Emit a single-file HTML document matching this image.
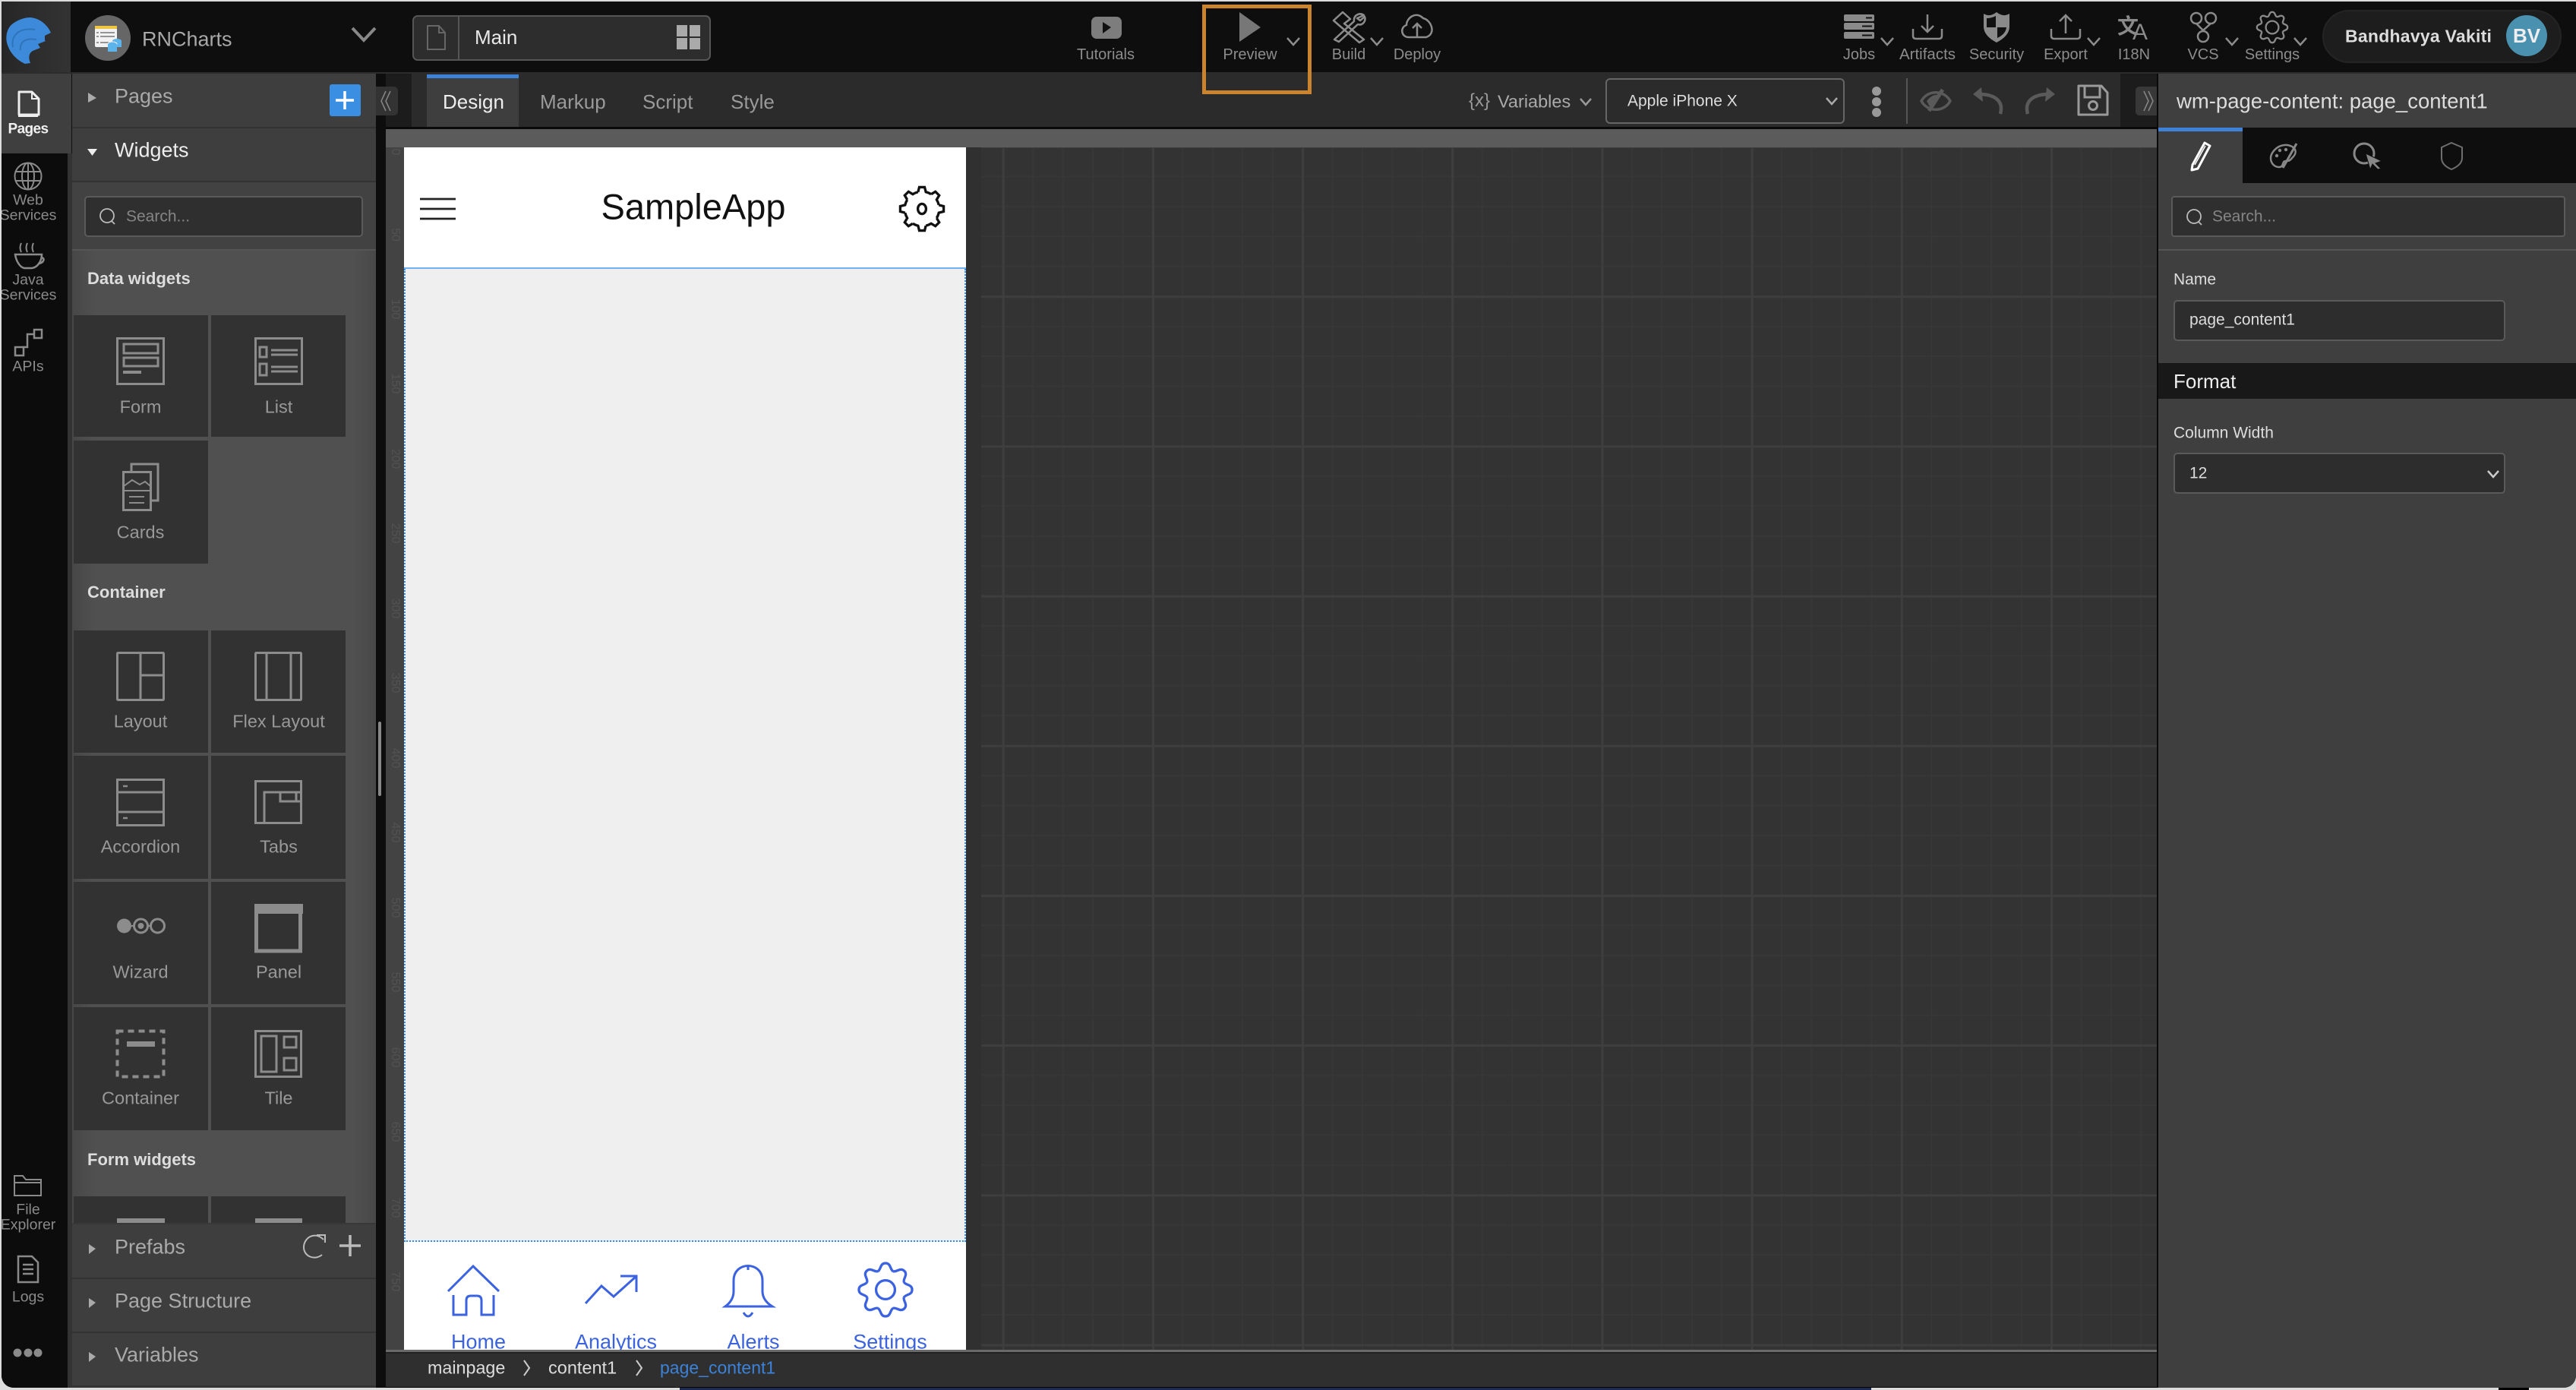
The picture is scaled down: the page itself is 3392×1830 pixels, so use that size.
<!DOCTYPE html>
<html><head><meta charset="utf-8">
<style>
html,body{margin:0;padding:0;width:3392px;height:1830px;overflow:hidden;background:#dcdcdc;font-family:"Liberation Sans","Noto Sans CJK SC",sans-serif}
#strip{position:absolute;left:0;top:1826px;width:3392px;height:4px;background:#dcdcdc;overflow:hidden}
#win{position:absolute;left:0;top:0;width:3392px;height:1830px;clip-path:inset(2px 0 3px 2px round 0 0 16px 16px);background:#0e0e0e;overflow:hidden}
.b{position:absolute}
.t{position:absolute;white-space:nowrap;line-height:1;transform:translateY(-50%)}
.c{position:absolute;white-space:nowrap;line-height:1;transform:translate(-50%,-50%)}
.l{font-size:20px;color:#8c8c8c}
.r{font-size:19.5px;color:#8a8a8a}
.h{font-size:27px;color:#aaa}
.w{font-size:23.5px;color:#999}
.s{font-size:21px;color:#858585}
.g{font-size:22px;font-weight:bold;color:#ddd}
.f{font-size:27px;color:#3b62e0}
.q{font-size:16px;color:#525252;left:520px;transform:translate(-50%,-50%) rotate(90deg)}
svg{position:absolute;left:0;top:0}
.i{fill:none;stroke:#8c8c8c;stroke-width:3}
.k{fill:#8c8c8c;stroke:none}
</style></head><body>
<div id="strip"><div class="b" style="left:895px;top:0;width:1569px;height:4px;background:#1a2b4d"></div><div class="b" style="left:3290px;top:0;width:40px;height:4px;background:#000"></div><div class="b" style="left:335px;top:1px;font-size:24px;color:#333;white-space:nowrap">Coming Features</div></div>
<div id="win">
<!-- top bar -->
<div class="b" style="left:0;top:0;width:3392px;height:95px;background:#0e0e0e"></div>
<div class="b" style="left:0;top:0;width:93px;height:97px;background:linear-gradient(90deg,#262626,#333)"></div>
<div class="b" style="left:0;top:95px;width:3392px;height:2px;background:#2c2c2c"></div>
<div class="b" style="left:543px;top:20px;width:389px;height:56px;background:#2d2d2d;border:2px solid #555;border-radius:7px"></div>
<div class="b" style="left:603px;top:21px;width:2px;height:58px;background:#555"></div>
<div class="b" style="left:3058px;top:13px;width:311px;height:66px;background:#1d1d1d;border:2px solid #242424;border-radius:36px"></div>
<div class="b" style="left:3300px;top:20px;width:54px;height:54px;background:#4a91b0;border-radius:50%"></div>
<div class="b" style="left:1583px;top:6px;width:134px;height:108px;border:5px solid #c9842d;z-index:5"></div>

<!-- left rail -->
<div class="b" style="left:0;top:97px;width:89px;height:1730px;background:#0c0c0c"></div>
<div class="b" style="left:0;top:97px;width:94px;height:105px;background:#3f3f3f"></div>
<div class="b" style="left:89px;top:202px;width:6px;height:1630px;background:#333"></div>

<!-- left panel -->
<div class="b" style="left:95px;top:97px;width:400px;height:70px;background:#3e3e3e"></div>
<div class="b" style="left:95px;top:167px;width:400px;height:2px;background:#333"></div>
<div class="b" style="left:95px;top:169px;width:400px;height:69px;background:#3e3e3e"></div>
<div class="b" style="left:95px;top:238px;width:400px;height:2px;background:#333"></div>
<div class="b" style="left:95px;top:240px;width:400px;height:88px;background:#424242"></div>
<div class="b" style="left:95px;top:328px;width:400px;height:2px;background:#555"></div>
<div class="b" style="left:111px;top:258px;width:363px;height:50px;background:#2f2f2f;border:2px solid #5a5a5a;border-radius:5px"></div>
<div class="b" style="left:95px;top:330px;width:400px;height:1300px;background:linear-gradient(90deg,#474747 0,#505050 30px,#505050 370px,#484848 100%)"></div>
<div class="b" style="left:434px;top:111px;width:41px;height:42px;background:#3b8fe3;border-radius:3px"></div>

<!-- tiles -->
<div class="b" style="left:97px;top:415px;width:177px;height:160px;background:#323232"></div>
<div class="b" style="left:278px;top:415px;width:177px;height:160px;background:#323232"></div>
<div class="b" style="left:97px;top:580px;width:177px;height:162px;background:#323232"></div>
<div class="b" style="left:97px;top:830px;width:177px;height:161px;background:#323232"></div>
<div class="b" style="left:278px;top:830px;width:177px;height:161px;background:#323232"></div>
<div class="b" style="left:97px;top:995px;width:177px;height:162px;background:#323232"></div>
<div class="b" style="left:278px;top:995px;width:177px;height:162px;background:#323232"></div>
<div class="b" style="left:97px;top:1161px;width:177px;height:161px;background:#323232"></div>
<div class="b" style="left:278px;top:1161px;width:177px;height:161px;background:#323232"></div>
<div class="b" style="left:97px;top:1326px;width:177px;height:162px;background:#323232"></div>
<div class="b" style="left:278px;top:1326px;width:177px;height:162px;background:#323232"></div>
<div class="b" style="left:97px;top:1575px;width:177px;height:40px;background:#323232"></div>
<div class="b" style="left:278px;top:1575px;width:177px;height:40px;background:#323232"></div>
<div class="b" style="left:154px;top:1604px;width:63px;height:8px;background:#8c8c8c"></div>
<div class="b" style="left:336px;top:1604px;width:62px;height:8px;background:#8c8c8c"></div>
<!-- bottom accordion -->
<div class="b" style="left:95px;top:1610px;width:400px;height:2px;background:#383838;border-radius:6px 6px 0 0"></div>
<div class="b" style="left:95px;top:1612px;width:400px;height:70px;background:#3e3e3e"></div>
<div class="b" style="left:95px;top:1682px;width:400px;height:2px;background:#333"></div>
<div class="b" style="left:95px;top:1684px;width:400px;height:69px;background:#3e3e3e"></div>
<div class="b" style="left:95px;top:1753px;width:400px;height:2px;background:#333"></div>
<div class="b" style="left:95px;top:1755px;width:400px;height:69px;background:#3e3e3e"></div>
<div class="b" style="left:95px;top:1824px;width:400px;height:6px;background:#333"></div>

<!-- center -->
<div class="b" style="left:495px;top:97px;width:13px;height:1733px;background:#0d0d0d"></div>
<div class="b" style="left:498px;top:950px;width:4px;height:98px;background:#888;border-radius:2px"></div>
<div class="b" style="left:508px;top:97px;width:34px;height:70px;background:#1c1c1c"></div>
<div class="b" style="left:542px;top:97px;width:2250px;height:70px;background:#2b2b2b"></div>
<div class="b" style="left:2792px;top:97px;width:50px;height:70px;background:#1c1c1c"></div>
<div class="b" style="left:495px;top:114px;width:29px;height:38px;background:#333;border-radius:0 5px 5px 0"></div>
<div class="b" style="left:2812px;top:114px;width:30px;height:38px;background:#383838;border-radius:5px 0 0 5px"></div>
<div class="b" style="left:562px;top:98px;width:121px;height:69px;background:#3e3e3e"></div>
<div class="b" style="left:562px;top:98px;width:121px;height:5px;background:#3b82d8"></div>
<div class="b" style="left:508px;top:167px;width:2334px;height:3px;background:#0a0a0a"></div>
<div class="b" style="left:2114px;top:103px;width:311px;height:56px;background:#2b2b2b;border:2px solid #666;border-radius:6px"></div>
<div class="b" style="left:2510px;top:103px;width:2px;height:60px;background:#555"></div>

<!-- canvas -->
<div class="b" style="left:508px;top:170px;width:2332px;height:1610px;background-color:#333;
background-image:linear-gradient(90deg,#3e3e3e 3px,transparent 3px),linear-gradient(0deg,transparent calc(100% - 3px),#3e3e3e calc(100% - 3px)),linear-gradient(90deg,#373737 2px,transparent 2px),linear-gradient(0deg,transparent calc(100% - 2px),#373737 calc(100% - 2px));
background-size:197.2px 197.2px,197.2px 197.2px,39.44px 39.44px,39.44px 39.44px;
background-position:23px 0,0 22px,23px 0,0 22px"></div>
<div class="b" style="left:508px;top:170px;width:24px;height:1610px;background:#434343"></div>
<div class="b" style="left:508px;top:170px;width:2332px;height:24px;background:#5b5b5b"></div>
<div class="b" style="left:1272px;top:194px;width:20px;height:1585px;background:#303030"></div>
<div class="c q" style="top:200px">0</div>
<div class="c q" style="top:309px">50</div>
<div class="c q" style="top:407px">100</div>
<div class="c q" style="top:505px">150</div>
<div class="c q" style="top:604px">200</div>
<div class="c q" style="top:702px">250</div>
<div class="c q" style="top:801px">300</div>
<div class="c q" style="top:899px">350</div>
<div class="c q" style="top:998px">400</div>
<div class="c q" style="top:1096px">450</div>
<div class="c q" style="top:1195px">500</div>
<div class="c q" style="top:1293px">550</div>
<div class="c q" style="top:1392px">600</div>
<div class="c q" style="top:1490px">650</div>
<div class="c q" style="top:1590px">700</div>
<div class="c q" style="top:1687px">750</div>

<!-- phone -->
<div class="b" style="left:532px;top:194px;width:740px;height:158px;background:#fff"></div>
<div class="b" style="left:532px;top:352px;width:740px;height:2px;background:#6eb1f5"></div>
<div class="b" style="left:532px;top:354px;width:736px;height:1279px;background:#efefef;border:2px dotted #2f8fee;border-top:0"></div>
<div class="b" style="left:532px;top:1635px;width:740px;height:142px;background:#fff"></div>

<!-- breadcrumb -->
<div class="b" style="left:508px;top:1777px;width:2332px;height:3px;background:#6a6a6a"></div>
<div class="b" style="left:508px;top:1780px;width:2332px;height:47px;background:#2f2f2f"></div>
<div class="b" style="left:508px;top:1780px;width:2332px;height:2px;background:#222"></div>
<div class="b" style="left:508px;top:1826px;width:2332px;height:2px;background:#000"></div>

<!-- right panel -->
<div class="b" style="left:2840px;top:97px;width:552px;height:1733px;background:#3f3f3f"></div>
<div class="b" style="left:2840px;top:97px;width:2px;height:1733px;background:#0a0a0a"></div>
<div class="b" style="left:2842px;top:168px;width:550px;height:73px;background:#0e0e0e"></div>
<div class="b" style="left:2842px;top:168px;width:111px;height:73px;background:#3f3f3f"></div>
<div class="b" style="left:2842px;top:168px;width:111px;height:5px;background:#3b82d8"></div>
<div class="b" style="left:2859px;top:258px;width:515px;height:50px;background:#2f2f2f;border:2px solid #5a5a5a;border-radius:4px"></div>
<div class="b" style="left:2842px;top:328px;width:550px;height:2px;background:#555"></div>
<div class="b" style="left:2862px;top:395px;width:433px;height:50px;background:#2d2d2d;border:2px solid #5a5a5a;border-radius:5px"></div>
<div class="b" style="left:2842px;top:478px;width:550px;height:47px;background:#181818"></div>
<div class="b" style="left:2862px;top:596px;width:433px;height:50px;background:#2d2d2d;border:2px solid #5a5a5a;border-radius:5px"></div>

<!-- icons -->
<svg width="3392" height="1830" viewBox="0 0 3392 1830" fill="none">
<defs>
<g id="gt"><path d="M-8.55 -37.03 L-5.85 -47.64 L5.85 -47.64 L8.55 -37.03 A38 38 0 0 1 20.1 -32.2"/></g>
<g id="gear"><use href="#gt"/><use href="#gt" transform="rotate(45)"/><use href="#gt" transform="rotate(90)"/><use href="#gt" transform="rotate(135)"/><use href="#gt" transform="rotate(180)"/><use href="#gt" transform="rotate(225)"/><use href="#gt" transform="rotate(270)"/><use href="#gt" transform="rotate(315)"/></g>
<g id="gl"><path d="M-13.8 -33.3 C-8 -36 -10 -48 0 -48 C10 -48 8 -36 13.8 -33.3"/></g>
<g id="gear2"><use href="#gl"/><use href="#gl" transform="rotate(45)"/><use href="#gl" transform="rotate(90)"/><use href="#gl" transform="rotate(135)"/><use href="#gl" transform="rotate(180)"/><use href="#gl" transform="rotate(225)"/><use href="#gl" transform="rotate(270)"/><use href="#gl" transform="rotate(315)"/></g>
</defs>

<!-- logo -->
<path d="M40 23 C52 24 62 32 67 43 L59 47 L59 53 L60 54 L50 58 L53 63 L43 67 C38 70 37 76 40 83 L33 84 C20 78 12 68 9 56 C7 46 10 36 17 31 C24 26 32 23 40 23Z" fill="#3c8ad9"/>
<path d="M17 62 C14 46 26 36 46 39 M27 66 C26 54 34 50 48 52" stroke="#2f74bb" stroke-width="2"/>
<!-- app icon -->
<circle cx="142" cy="50" r="30" fill="#666"/>
<rect x="125" y="34" width="29" height="28" rx="2" fill="#f2f2f2"/>
<rect x="125" y="34" width="29" height="4" fill="#eec640"/>
<path d="M127 43h3M127 48h3M127 56h3M132 43h19M132 48h19M132 56h12" stroke="#777" stroke-width="1.5"/>
<ellipse cx="154" cy="54" rx="6" ry="3" fill="#5db4ea"/><rect x="148" y="54" width="12" height="8" fill="#5db4ea"/>
<ellipse cx="148" cy="58" rx="6" ry="3" fill="#5db4ea" stroke="#eee"/><rect x="142" y="58" width="12" height="10" fill="#5db4ea"/>
<!-- chevron -->
<path d="M464 37 L479 53 L494 37" stroke="#888" stroke-width="4"/>
<!-- main box icons -->
<path d="M563 34 H578 L586 43 V65 H563Z M578 34 V43 H586" stroke="#666" stroke-width="2"/>
<g fill="#aaa"><rect x="891" y="33" width="14" height="15"/><rect x="908" y="33" width="14" height="15"/><rect x="891" y="50" width="14" height="15"/><rect x="908" y="50" width="14" height="15"/></g>
<!-- tutorials -->
<rect x="1437" y="22" width="40" height="29" rx="7" fill="#7d7d7d"/>
<path d="M1452 29 L1463 36 L1452 44Z" fill="#111"/>
<path d="M1632 16 L1660 36 L1632 55Z" fill="#777"/>
<g stroke="#8c8c8c" stroke-width="2.5">
<path d="M1695 50 L1703 59 L1711 50"/>
<path d="M1805 50 L1813 59 L1821 50"/>
<path d="M2477 50 L2485 59 L2493 50"/>
<path d="M2749 50 L2757 59 L2765 50"/>
<path d="M2931 50 L2939 59 L2947 50"/>
<path d="M3021 50 L3029 59 L3037 50"/>
<path d="M2081 130 L2088 138 L2095 130" stroke="#999"/>
<path d="M2405 129 L2412 137 L2419 129" stroke="#aaa"/>
</g>
<!-- build -->
<path d="M1756 27 L1768 16 L1778 25 L1770 31 L1796 52 L1790 56 L1764 34Z M1796 20 C1790 16 1782 20 1783 28 L1757 52 L1763 55 L1788 32 C1794 34 1799 28 1797 22 L1791 27 L1787 24Z" stroke="#8c8c8c" stroke-width="2.5" stroke-linejoin="round"/>
<!-- deploy -->
<path d="M1855 49 C1845 49 1843 36 1852 33 C1852 24 1864 14 1874 24 C1884 26 1892 44 1878 49Z M1866 48 V31 M1860 37 L1866 31 L1872 37" stroke="#8c8c8c" stroke-width="2.5"/>
<!-- jobs -->
<g fill="#8a8a8a"><rect x="2428" y="19" width="40" height="9" rx="2"/><rect x="2428" y="30" width="40" height="9" rx="2"/><rect x="2428" y="42" width="40" height="9" rx="2"/></g>
<path d="M2457 23.500h8M2452 34.500h13M2452 46.500h13" stroke="#111" stroke-width="2"/>
<!-- artifacts -->
<path d="M2519 38 V47 Q2519 51 2523 51 H2553 Q2557 51 2557 47 V38 M2538 19 V42 M2530 34 L2538 42 L2546 34" stroke="#8a8a8a" stroke-width="2.500"/>
<!-- security -->
<path d="M2612 18 Q2620 23 2629 16 Q2638 23 2646 18 V35 Q2646 47 2629 56 Q2612 47 2612 35Z" fill="#8a8a8a"/>
<path d="M2616 24 Q2622 24 2628 21 V36 H2616Z M2630 36 H2642 Q2641 45 2630 50Z" fill="#111"/>
<!-- export -->
<path d="M2701 38 V47 Q2701 51 2705 51 H2735 Q2739 51 2739 47 V38 M2720 44 V20 M2712 28 L2720 20 L2728 28" stroke="#8a8a8a" stroke-width="2.500"/>
<!-- vcs -->
<g stroke="#8a8a8a" stroke-width="2.500"><circle cx="2892" cy="24" r="7"/><circle cx="2911" cy="24" r="7"/><circle cx="2901" cy="48" r="7"/><path d="M2892 31 L2901 40 L2911 31 M2901 40 V41"/></g>
<!-- settings gear -->
<g transform="translate(2992 36) scale(.42)" stroke="#8a8a8a" stroke-width="5.500"><use href="#gear2"/><circle r="20"/></g>
<!-- kebab -->
<g fill="#999"><circle cx="2471" cy="120" r="6"/><circle cx="2471" cy="134" r="6"/><circle cx="2471" cy="148" r="6"/></g>
<!-- eye -->
<path d="M2530 133 C2538 118 2560 118 2568 133 C2560 148 2538 148 2530 133Z" stroke="#5a5a5a" stroke-width="3.500"/>
<path d="M2540 146 L2558 118" stroke="#5a5a5a" stroke-width="5"/>
<path d="M2537 133 Q2544 124 2552 125 L2542 142Z" fill="#5a5a5a"/>
<!-- undo/redo -->
<path d="M2634 150 C2639 132 2625 124 2606 124" stroke="#5a5a5a" stroke-width="4.500"/>
<path d="M2598 124 L2609 115 L2611 134Z" fill="#5a5a5a"/>
<path d="M2670 150 C2665 132 2679 124 2698 124" stroke="#5a5a5a" stroke-width="4.500"/>
<path d="M2706 124 L2695 115 L2693 134Z" fill="#5a5a5a"/>
<!-- save -->
<path d="M2737 113 H2767 L2775 122 V151 H2737Z" stroke="#9a9a9a" stroke-width="3" stroke-linejoin="round"/>
<path d="M2745 113 V128 H2765 V113" stroke="#9a9a9a" stroke-width="3"/>
<circle cx="2756" cy="139" r="5.500" stroke="#9a9a9a" stroke-width="3"/>
<!-- collapse chevrons -->
<path d="M508 120 L502 133 L508 146 M514 120 L508 133 L514 146" stroke="#888" stroke-width="1.500"/>
<path d="M2823 120 L2829 133 L2823 146 M2829 120 L2835 133 L2829 146" stroke="#888" stroke-width="1.500"/>

<!-- rail icons -->
<path d="M25 121 H42 L51 130 V151 H25Z" stroke="#eee" stroke-width="3" stroke-linejoin="round"/>
<path d="M42 121 V130 H51 M24 153 H50" stroke="#eee" stroke-width="2"/>
<g stroke="#8a8a8a" stroke-width="2"><circle cx="37" cy="232" r="17.500"/><ellipse cx="37" cy="232" rx="8" ry="17.500"/><path d="M37 214 V250 M20 226 H54 M20 238 H54"/></g>
<path d="M20 335 H55 C55 343 50 352 42 353 H32 C26 352 21 343 20 335Z M54 339 C60 339 58 347 50 347" stroke="#8a8a8a" stroke-width="2.500"/>
<path d="M28 320 Q25 326 28 332 M36 320 Q33 326 36 332 M44 320 Q41 326 44 332" stroke="#8a8a8a" stroke-width="2"/>
<g stroke="#8a8a8a" stroke-width="2.500"><rect x="20" y="457" width="11" height="11"/><rect x="45" y="434" width="10" height="11"/><path d="M31 457 H36 V440 H45"/></g>
<path d="M19 1574 V1548 H30 L34 1553 H54 V1574Z M19 1557 H54" stroke="#8a8a8a" stroke-width="2"/>
<path d="M24 1654 H42 L50 1662 V1688 H24Z M30 1665 H44 M30 1671 H44 M30 1677 H44" stroke="#8a8a8a" stroke-width="2.500"/>
<g fill="#8a8a8a"><circle cx="23" cy="1781" r="5.500"/><circle cx="37" cy="1781" r="5.500"/><circle cx="50" cy="1781" r="5.500"/></g>

<!-- panel arrows -->
<path d="M116 122 L127 129 L116 135Z" fill="#aaa"/>
<path d="M115 196 L128 196 L121.500 205Z" fill="#eee"/>
<path d="M117 1638 L126 1644 L117 1651Z M117 1709 L126 1715 L117 1722Z M117 1780 L126 1786 L117 1793Z" fill="#aaa"/>
<path d="M454 120 V144 M442 132 H466" stroke="#fff" stroke-width="3.500"/>
<!-- search icons -->
<circle cx="141" cy="284" r="9" stroke="#bbb" stroke-width="1.800"/><path d="M147 291 L151 295" stroke="#bbb" stroke-width="1.800"/>
<circle cx="2889" cy="285" r="9" stroke="#bbb" stroke-width="1.800"/><path d="M2895 292 L2899 296" stroke="#bbb" stroke-width="1.800"/>
<!-- prefabs icons -->
<path d="M426 1632 C414 1620 400 1630 400 1642 C400 1654 414 1660 424 1652" stroke="#bbb" stroke-width="2"/><path d="M417 1628 H428 V1638" stroke="#bbb" stroke-width="2" fill="none" transform="translate(0 -2)"/>
<path d="M461 1626 V1654 M447 1640 H475" stroke="#bbb" stroke-width="3.500"/>

<!-- tile icons -->
<g class="i">
<rect x="154.500" y="445.500" width="61" height="60"/><rect x="163" y="453" width="45" height="12"/><rect x="163" y="471" width="45" height="11"/>
<rect x="336.500" y="445.500" width="61" height="60"/><rect x="342" y="457" width="9" height="13"/><rect x="342" y="479" width="9" height="15"/>
<path d="M357 461 H392 M357 467 H392 M357 483 H392 M357 489 H392"/>
<path d="M173 620 V611 H208 V659 H199"/><rect x="162.500" y="621.500" width="36" height="50"/><path d="M163 640 L174 632 L184 638 L191 634 L198 640 M163 646 H198 M170 654 H190 M170 662 H190" stroke-width="2"/>
<rect x="154.500" y="859.500" width="61" height="62" rx="1"/><path d="M185 859 V922 M185 889 H216"/>
<rect x="336.500" y="859.500" width="60" height="62" rx="1"/><path d="M351 859 V922 M383 859 V922"/>
<rect x="154.500" y="1026.500" width="61" height="60"/><path d="M154 1043 H216 M154 1069 H216"/>
<path d="M162 1035 H168 M162 1077 H168" stroke-width="2.500"/>
<rect x="336.500" y="1028.500" width="60" height="55"/><path d="M348 1084 V1043 H397 M369 1043 V1055 H397 M390 1043 V1055"/>
<circle cx="185.500" cy="1219" r="9"/><circle cx="207.500" cy="1219" r="9"/>
<path d="M173 1219 H177 M195 1219 H198" stroke-width="2"/>
<rect x="337.500" y="1193" width="58" height="59" stroke-width="5"/>
<rect x="154.500" y="1357.500" width="61" height="60" stroke-width="4" stroke-dasharray="8 6"/>
<rect x="336.500" y="1357.500" width="60" height="60"/><rect x="344" y="1364" width="20" height="47"/><rect x="374" y="1365" width="16" height="14"/><rect x="374" y="1393" width="16" height="16"/>
</g>
<g class="k">
<rect x="162" y="488" width="24" height="4"/>
<ellipse cx="163.500" cy="1219" rx="9.500" ry="9.500"/><circle cx="185.500" cy="1219" r="4"/>
<rect x="335" y="1190" width="64" height="13"/>
<rect x="167" y="1371" width="37" height="7"/>
</g>

<!-- phone header -->
<path d="M553 262 H600 M553 275 H600 M553 288 H600" stroke="#222" stroke-width="2.800"/>
<g transform="translate(1214 275) scale(.6)" stroke="#111" stroke-width="5.500"><use href="#gear"/><ellipse rx="9" ry="11"/></g>
<!-- footer icons -->
<g stroke="#3b62e0" stroke-width="3">
<path d="M590 1700 L623 1667 L657 1700"/>
<path d="M597 1705 V1731 H614 V1712 Q614 1706 620 1706 H628 Q634 1706 634 1712 V1731 H650 V1705"/>
<path d="M771 1716 L792 1693 L808 1707 L837 1681"/>
<path d="M817 1680 H838 V1701"/>
<path d="M955 1720 H1017 Q1004 1712 1004 1700 V1686 C1004 1660 966 1660 966 1686 V1700 Q966 1712 955 1720Z"/>
<path d="M985 1666 V1672"/>
<path d="M979 1728 Q985 1738 991 1728"/>
</g>
<g transform="translate(1166 1698) scale(.73)" stroke="#3b62e0" stroke-width="4.500"><use href="#gear2"/><circle r="17"/></g>
<!-- breadcrumb chev -->
<path d="M690 1791 L697 1801 L690 1811 M838 1791 L845 1801 L838 1811" stroke="#ccc" stroke-width="2"/>
<!-- select chevron -->
<path d="M3276 620 L3283 628 L3290 620" stroke="#ccc" stroke-width="2.500"/>
<!-- right tabs -->
<path d="M2887 217 L2903 188 L2910 192 L2894 222 L2886 224Z" stroke="#fff" stroke-width="3" stroke-linejoin="round"/><path d="M2890 217 L2904 192" stroke="#fff" stroke-width="1.500"/>
<path d="M3020 206 C3028 196 3016 190 3008 191 C2996 192 2990 203 2990 208 C2990 216 2996 220 3001 220 C3008 220 3004 212 3010 212 C3016 212 3016 210 3020 206Z" stroke="#888" stroke-width="2.500"/>
<g fill="#888"><circle cx="2998" cy="205" r="2.200"/><circle cx="3002" cy="198" r="2.200"/><circle cx="3010" cy="197" r="2.200"/></g>
<path d="M3024 189 L3010 214 M3010 214 L3006 221" stroke="#888" stroke-width="3"/>
<circle cx="3113" cy="202" r="13" stroke="#888" stroke-width="3"/>
<path d="M3115 202 L3136 212 L3128 215 L3135 222 L3131 223 L3124 216 L3121 223Z" fill="#888" stroke="#111" stroke-width="1"/>
<path d="M3228 188 L3242 194 V208 C3242 215 3235 220 3228 223 C3221 220 3215 215 3215 208 V194Z" stroke="#6e6e6e" stroke-width="2"/>
</svg>

<!-- text -->
<div class="t" style="left:187px;top:52px;font-size:27px;color:#a8a8a8">RNCharts</div>
<div class="t" style="left:625px;top:49px;font-size:26px;color:#e8e8e8">Main</div>
<div class="c l" style="left:1456px;top:72px">Tutorials</div>
<div class="c l" style="left:1646px;top:72px">Preview</div>
<div class="c l" style="left:1776px;top:72px">Build</div>
<div class="c l" style="left:1866px;top:72px">Deploy</div>
<div class="c l" style="left:2448px;top:72px">Jobs</div>
<div class="c l" style="left:2538px;top:72px;font-size:20.5px">Artifacts</div>
<div class="c l" style="left:2629px;top:72px">Security</div>
<div class="c l" style="left:2720px;top:72px">Export</div>
<div class="c l" style="left:2810px;top:72px">I18N</div>
<div class="c l" style="left:2901px;top:72px">VCS</div>
<div class="c l" style="left:2992px;top:72px">Settings</div>
<svg width="3392" height="1830" viewBox="0 0 3392 1830"><text x="2788" y="44" font-size="28" font-weight="bold" fill="#8a8a8a" font-family="'Noto Sans CJK SC',sans-serif">文</text><text x="2808" y="52" font-size="30" fill="#8a8a8a" font-family="'Liberation Sans',sans-serif">A</text></svg>
<div class="t" style="left:3088px;top:48px;font-size:23px;font-weight:bold;color:#ddd;letter-spacing:.25px">Bandhavya Vakiti</div>
<div class="c" style="left:3327px;top:47px;font-size:26px;font-weight:bold;color:#eee">BV</div>

<div class="c" style="left:37px;top:170px;font-size:19px;color:#f0f0f0;font-weight:bold;letter-spacing:-.6px">Pages</div>
<div class="c r" style="left:37px;top:264px">Web</div><div class="c r" style="left:37px;top:284px">Services</div>
<div class="c r" style="left:37px;top:369px">Java</div><div class="c r" style="left:37px;top:389px">Services</div>
<div class="c r" style="left:37px;top:483px">APIs</div>
<div class="c r" style="left:37px;top:1593px">File</div><div class="c r" style="left:37px;top:1613px">Explorer</div>
<div class="c r" style="left:37px;top:1708px">Logs</div>

<div class="t h" style="left:151px;top:127px">Pages</div>
<div class="t h" style="left:151px;top:198px;color:#eee">Widgets</div>
<div class="t s" style="left:166px;top:285px">Search...</div>
<div class="t g" style="left:115px;top:367px">Data widgets</div>
<div class="t g" style="left:115px;top:780px">Container</div>
<div class="t g" style="left:115px;top:1527px">Form widgets</div>
<div class="c w" style="left:185px;top:536px">Form</div>
<div class="c w" style="left:367px;top:536px">List</div>
<div class="c w" style="left:185px;top:701px">Cards</div>
<div class="c w" style="left:185px;top:950px">Layout</div>
<div class="c w" style="left:367px;top:950px">Flex Layout</div>
<div class="c w" style="left:185px;top:1115px">Accordion</div>
<div class="c w" style="left:367px;top:1115px">Tabs</div>
<div class="c w" style="left:185px;top:1280px">Wizard</div>
<div class="c w" style="left:367px;top:1280px">Panel</div>
<div class="c w" style="left:185px;top:1446px">Container</div>
<div class="c w" style="left:367px;top:1446px">Tile</div>
<div class="t h" style="left:151px;top:1642px">Prefabs</div>
<div class="t h" style="left:151px;top:1713px">Page Structure</div>
<div class="t h" style="left:151px;top:1784px">Variables</div>

<div class="t" style="left:583px;top:134px;font-size:26px;color:#eee">Design</div>
<div class="t" style="left:711px;top:134px;font-size:26px;color:#9a9a9a">Markup</div>
<div class="t" style="left:846px;top:134px;font-size:26px;color:#9a9a9a">Script</div>
<div class="t" style="left:962px;top:134px;font-size:26px;color:#9a9a9a">Style</div>
<div class="t" style="left:1934px;top:133px;font-size:24px;color:#999">{x}</div>
<div class="t" style="left:1972px;top:134px;font-size:23.500px;color:#aaa">Variables</div>
<div class="t" style="left:2143px;top:133px;font-size:21px;color:#ddd">Apple iPhone X</div>

<div class="c" style="left:913px;top:272px;font-size:47px;color:#111">SampleApp</div>
<div class="b" style="left:0;top:0;width:3392px;height:1777px;overflow:hidden">
<div class="c f" style="left:630px;top:1767px">Home</div>
<div class="c f" style="left:811px;top:1767px">Analytics</div>
<div class="c f" style="left:992px;top:1767px">Alerts</div>
<div class="c f" style="left:1172px;top:1767px">Settings</div>
</div>
<div class="t" style="left:563px;top:1801px;font-size:23.300px;color:#ddd">mainpage</div>
<div class="t" style="left:722px;top:1801px;font-size:23.500px;color:#ddd">content1</div>
<div class="t" style="left:869px;top:1801px;font-size:23px;color:#3b82d8">page_content1</div>

<div class="t" style="left:2866px;top:133px;font-size:27.500px;color:#ddd">wm-page-content: page_content1</div>
<div class="t s" style="left:2913px;top:285px">Search...</div>
<div class="t" style="left:2862px;top:368px;font-size:21px;color:#ddd">Name</div>
<div class="t" style="left:2883px;top:421px;font-size:21px;color:#ddd">page_content1</div>
<div class="t" style="left:2862px;top:502px;font-size:26px;color:#eee">Format</div>
<div class="t" style="left:2862px;top:570px;font-size:21px;color:#ddd">Column Width</div>
<div class="t" style="left:2883px;top:623px;font-size:21px;color:#ddd">12</div>
</div>
</body></html>
